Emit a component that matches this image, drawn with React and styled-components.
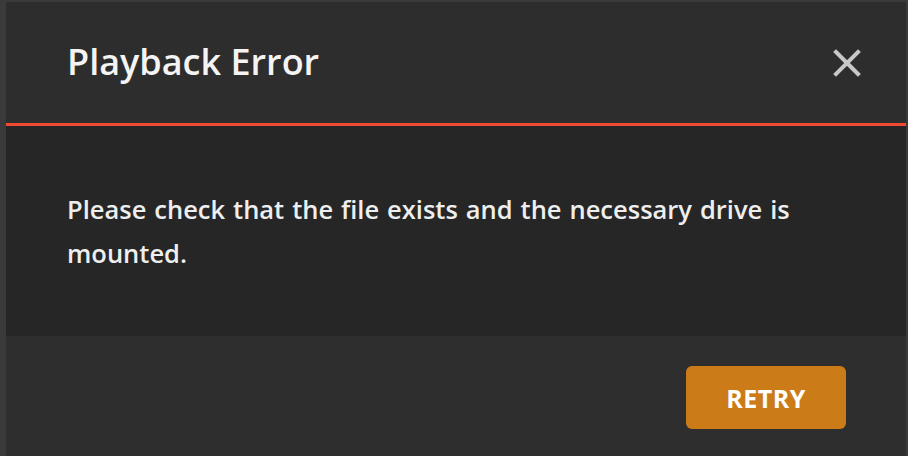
import React from "react";
import styled, { createGlobalStyle } from "styled-components";

const Global = createGlobalStyle`
  html, body { margin: 0; padding: 0; background: #3a3a3a; }
  body { font-family: "Open Sans", "Noto Sans", sans-serif; }
  #root { width: 908px; height: 456px; overflow: hidden; }
`;

const Frame = styled.div`
  width: 908px;
  height: 456px;
  padding: 2px 2px 0 6px;
  box-sizing: border-box;
  background: #3a3a3a;
`;

const Dialog = styled.div`
  display: flex;
  flex-direction: column;
  height: 100%;
  background: #2d2d2d;
`;

const Header = styled.div`
  display: flex;
  align-items: center;
  justify-content: space-between;
  height: 124px;
  padding: 0 44px 0 61px;
  border-bottom: 3px solid #f04a33;
  box-sizing: border-box;
  background: #2d2d2d;
`;

const Title = styled.h1`
  margin: -1px 0 0;
  font-size: 36px;
  font-weight: 600;
  color: #f4f4f4;
  line-height: 1;
`;

const CloseButton = styled.button`
  background: none;
  border: none;
  padding: 0;
  width: 30px;
  height: 30px;
  display: flex;
  align-items: center;
  justify-content: center;
  cursor: pointer;
`;

const Body = styled.div`
  height: 210px;
  box-sizing: border-box;
  padding: 61px 61px 0;
  background: #262626;
  color: #eeeeee;
  font-size: 25.5px;
  font-weight: 600;
  line-height: 44px;
  word-spacing: 1.3px;
`;

const Footer = styled.div`
  flex: 1;
  display: flex;
  justify-content: flex-end;
  align-items: flex-start;
  padding: 30px 60px 0;
  background: #2e2e2e;
`;

const Button = styled.button`
  width: 160px;
  height: 63px;
  border: none;
  border-radius: 6px;
  background: #cc7b19;
  color: #ffffff;
  font-family: "Open Sans", sans-serif;
  font-weight: 700;
  font-size: 25px;
  letter-spacing: 0.5px;
  cursor: pointer;
`;

export default function App() {
  return (
    <>
      <Global />
      <Frame>
        <Dialog>
          <Header>
            <Title>Playback Error</Title>
            <CloseButton aria-label="Close">
              <svg width="28" height="28" viewBox="0 0 28 28">
                <path d="M3 3 L25 25 M25 3 L3 25" stroke="#c8c8c8" strokeWidth="4" strokeLinecap="square" />
              </svg>
            </CloseButton>
          </Header>
          <Body>
            Please check that the file exists and the necessary drive is mounted.
          </Body>
          <Footer>
            <Button>RETRY</Button>
          </Footer>
        </Dialog>
      </Frame>
    </>
  );
}
